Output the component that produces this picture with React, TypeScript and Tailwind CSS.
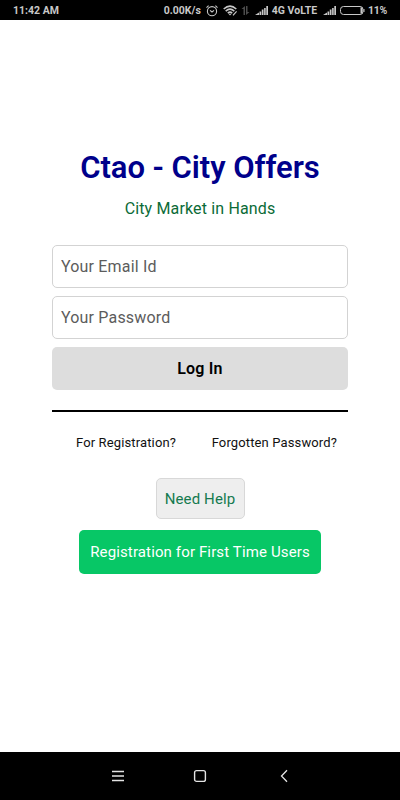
import { useState } from 'react'

function AlarmIcon() {
  return (
    <svg width="12" height="12" viewBox="0 0 12 12" fill="none" stroke="#c8c8c8" strokeWidth="1.1">
      <circle cx="6" cy="6.2" r="4.6" />
      <path d="M4 5.4 6 7 8 5.4M.5 2.6 2.6.7M11.5 2.6 9.4.7" />
    </svg>
  )
}

function WifiIcon() {
  return (
    <svg width="15" height="11" viewBox="0 0 15 11" fill="none" stroke="#c8c8c8" strokeWidth="1.5">
      <path d="M.7 4Q7 -1.8 13.3 4M2.7 6.1Q7 2.2 11.3 6.1M4.8 8.1Q7 6.1 9.2 8.1" />
      <path d="M7 10.6 5.4 8.8H8.6Z" fill="#c8c8c8" stroke="none" />
      <path d="M10 10.4 13.6 6.4" strokeWidth="1.2" />
    </svg>
  )
}

function DataIcon() {
  return (
    <svg width="9" height="9" viewBox="0 0 9 9" fill="#4c4c4c">
      <path d="M2.5 9V3H.5L4 0V9ZM5 0H6.5V6H8.5L5 9Z" />
    </svg>
  )
}

function SignalIcon() {
  return (
    <svg width="13" height="9" viewBox="0 0 13 9" fill="#c8c8c8">
      <path d="M0 9 4 6.4V9ZM4.5 5.4H6.2V9H4.5ZM6.8 3.6H8.5V9H6.8ZM9.1 1.9H10.7V9H9.1ZM11.3 0H13V9H11.3Z" />
    </svg>
  )
}

function BatteryIcon() {
  return (
    <svg width="25" height="9" viewBox="0 0 25 9" fill="none" stroke="#c8c8c8">
      <rect x=".5" y=".5" width="22.5" height="8" rx="3" />
      <path d="M20.5 1.5H22.5V7.5H20.5Z" fill="#c8c8c8" stroke="none" />
      <path d="M24 3V6" />
    </svg>
  )
}

function StatusBar() {
  return (
    <header className="flex h-5 shrink-0 items-center bg-black pl-[13px] pr-[13px] pt-px text-[10.5px] font-bold leading-5 text-[#c8c8c8]">
      <span>11:42 AM</span>
      <div className="ml-auto flex items-center">
        <span>0.00K/s</span>
        <span className="ml-[5px]"><AlarmIcon /></span>
        <span className="ml-[5px]"><WifiIcon /></span>
        <span className="ml-[3px]"><DataIcon /></span>
        <span className="ml-[5px]"><SignalIcon /></span>
        <span className="ml-[4px]">4G VoLTE</span>
        <span className="ml-[6px]"><SignalIcon /></span>
        <span className="ml-[4px]"><BatteryIcon /></span>
        <span className="ml-[3px] tracking-[-0.3px]">11%</span>
      </div>
    </header>
  )
}

function NavBar() {
  return (
    <nav className="flex h-12 shrink-0 items-center bg-black pl-[111px]">
      <svg width="14" height="14" viewBox="0 0 14 14" fill="none" stroke="#e4e4e4" strokeWidth="1.3">
        <path d="M1 2.5H13M1 7H13M1 11.5H13" />
      </svg>
      <svg className="ml-[68px]" width="14" height="14" viewBox="0 0 14 14" fill="none" stroke="#e4e4e4" strokeWidth="1.4">
        <rect x="1.6" y="1.6" width="10.8" height="10.8" rx="2" />
      </svg>
      <svg className="ml-[70px]" width="14" height="14" viewBox="0 0 14 14" fill="none" stroke="#e4e4e4" strokeWidth="1.3">
        <path d="M10 1.2 4.5 7 10 12.8" />
      </svg>
    </nav>
  )
}

export default function App() {
  const [email, setEmail] = useState('')
  const [password, setPassword] = useState('')

  return (
    <div className="flex h-[800px] w-[400px] flex-col overflow-hidden bg-white font-['Roboto',sans-serif]">
      <StatusBar />

      <main className="flex flex-1 flex-col items-center px-[52px] pt-[128px]">
        <h1 className="whitespace-nowrap text-[31px] font-semibold leading-10 tracking-[-0.05px] text-[#00008b]">Ctao - City Offers</h1>
        <p className="mt-[9px] text-base leading-6 tracking-[0.15px] text-[#0b6b37]">City Market in Hands</p>

        <form className="mt-6 flex w-full flex-col" onSubmit={(e) => e.preventDefault()}>
          <input
            type="email"
            placeholder="Your Email Id"
            value={email}
            onChange={(e) => setEmail(e.target.value)}
            className="h-[43px] w-full rounded-[5px] border border-[#d3d3d3] px-2 text-base tracking-[0.18px] text-black placeholder:text-[#5c5c5c]"
          />
          <input
            type="password"
            placeholder="Your Password"
            value={password}
            onChange={(e) => setPassword(e.target.value)}
            className="mt-2 h-[43px] w-full rounded-[5px] border border-[#d3d3d3] px-2 text-base tracking-[0.18px] text-black placeholder:text-[#5c5c5c]"
          />
          <button type="submit" className="mt-2 h-[43px] w-full rounded-[5px] bg-[#dddddd] text-base font-semibold tracking-[0.2px] text-black">
            Log In
          </button>
        </form>

        <hr className="mt-5 w-full border-t-2 border-black" />

        <div className="mt-[21px] flex w-full justify-between pl-6 pr-[11px] text-[13px] leading-5 tracking-[0.13px] text-[#111111]">
          <a>For Registration?</a>
          <a>Forgotten Password?</a>
        </div>

        <button className="mt-[25px] h-[41px] w-[89px] whitespace-nowrap rounded-[5px] border border-[#d8d8d8] bg-[#eeeeee] pt-px text-[15px] tracking-[0.13px] text-[#157a50]">
          Need Help
        </button>
        <button className="mt-[11px] h-11 w-[242px] whitespace-nowrap rounded-[5px] bg-[#07c766] text-[15px] tracking-[0.13px] text-white">
          Registration for First Time Users
        </button>
      </main>

      <NavBar />
    </div>
  )
}
